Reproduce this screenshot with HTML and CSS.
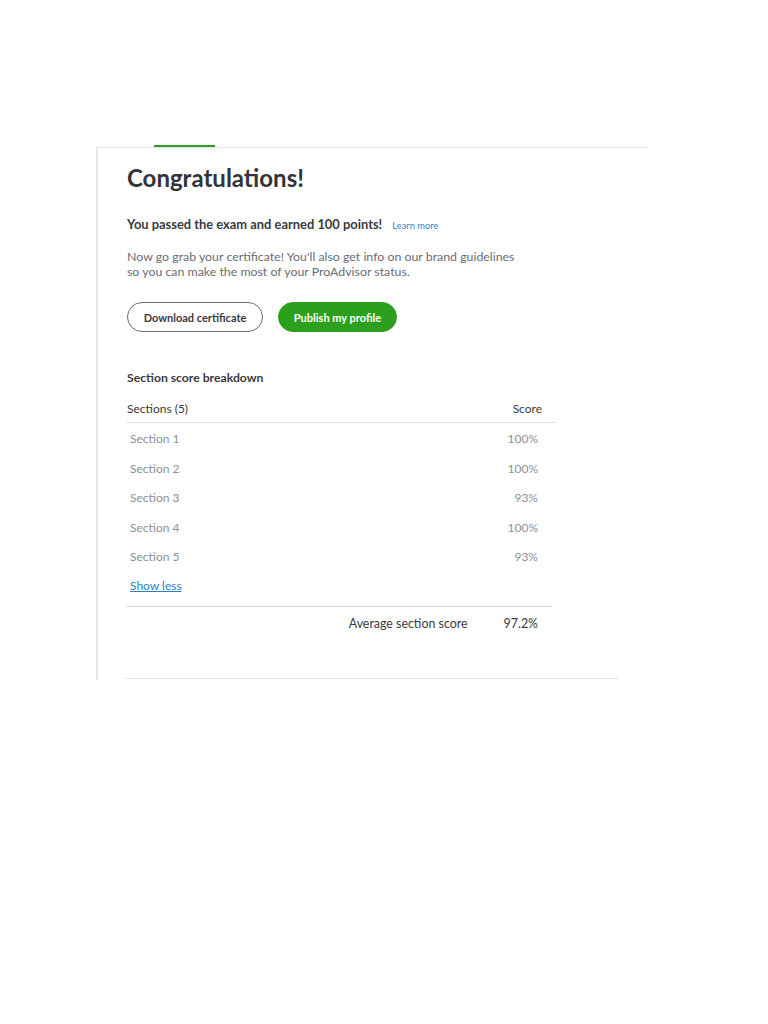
FILE: index.html
```html
<!DOCTYPE html>
<html lang="en">
<head>
<meta charset="utf-8">
<title>Congratulations</title>
<link rel="stylesheet" href="styles.css">
</head>
<body>
<div class="page">
  <div class="tabs"><span class="tab-indicator"></span></div>
  <section class="card">
    <h1 class="title">Congratulations!</h1>
    <p class="lead">You passed the exam and earned 100 points! <a class="learn" href="#">Learn more</a></p>
    <p class="body">Now go grab your certificate! You'll also get info on our brand guidelines<br>so you can make the most of your ProAdvisor status.</p>
    <div class="actions">
      <button class="btn btn-outline">Download certificate</button>
      <button class="btn btn-primary">Publish my profile</button>
    </div>
    <h2 class="subtitle">Section score breakdown</h2>
    <div class="table">
      <div class="thead">
        <span>Sections (5)</span>
        <span>Score</span>
      </div>
      <div class="row"><span>Section 1</span><span>100%</span></div>
      <div class="row"><span>Section 2</span><span>100%</span></div>
      <div class="row"><span>Section 3</span><span>93%</span></div>
      <div class="row"><span>Section 4</span><span>100%</span></div>
      <div class="row"><span>Section 5</span><span>93%</span></div>
      <a class="toggle" href="#">Show less</a>
      <div class="average">
        <span class="avg-label">Average section score</span>
        <span class="avg-value">97.2%</span>
      </div>
    </div>
    <div class="card-foot"></div>
  </section>
</div>
</body>
</html>
```

FILE: styles.css
```css
* { box-sizing: border-box; }
html, body { margin: 0; padding: 0; background: #fff; }
body {
  font-family: Lato, "Open Sans", "Liberation Sans", sans-serif;
  color: #393a3d;
}
.page {
  padding-top: 145px;
  padding-left: 96px;
}
.tabs {
  height: 2px;
  padding-left: 58px;
  display: flex;
}
.tab-indicator {
  display: block;
  width: 61px;
  height: 2px;
  background: #2ca01c;
}
.card {
  width: 552px;
  border-top: 1px solid #e3e3e3;
  border-left: 2px solid #e6e6e6;
  padding: 14px 0 0 29px;
  height: 533px;
}
.title {
  margin: 0;
  font-size: 24px;
  line-height: 32px;
  font-weight: 700;
  color: #333438;
}
.lead {
  margin: 22px 0 0;
  font-size: 12.9px;
  line-height: 16px;
  font-weight: 700;
  color: #393a3d;
}
.learn {
  font-size: 9.3px;
  font-weight: 400;
  color: #3a7fc4;
  text-decoration: none;
  margin-left: 7px;
}
.body {
  margin: 15px 0 0;
  font-size: 12.35px;
  line-height: 15px;
  color: #6b6c72;
}
.actions {
  display: flex;
  gap: 15px;
  margin-top: 23px;
}
.btn {
  font-family: inherit;
  height: 30px;
  border-radius: 15px;
  font-size: 11px;
  font-weight: 700;
  padding: 0;
  cursor: pointer;
}
.btn-outline {
  width: 136px;
  background: #fff;
  border: 1px solid #6b6c72;
  color: #393a3d;
}
.btn-primary {
  width: 119px;
  background: #2ca01c;
  border: 1px solid #2ca01c;
  color: #fff;
}
.subtitle {
  margin: 38px 0 0;
  font-size: 12.2px;
  line-height: 16px;
  font-weight: 700;
  color: #393a3d;
}
.table {
  width: 429px;
  margin-top: 15px;
}
.thead {
  display: flex;
  justify-content: space-between;
  font-size: 12px;
  line-height: 16px;
  color: #393a3d;
  padding: 0 14px 5px 0;
  border-bottom: 1px solid #dfdfdf;
}
.row {
  display: flex;
  justify-content: space-between;
  font-size: 12px;
  line-height: 16px;
  color: #8d9096;
  padding: 0 18px 0 3px;
  margin-top: 13.5px;
}
.thead + .row { margin-top: 8px; }
.toggle {
  display: inline-block;
  margin: 13px 0 0 3px;
  font-size: 12px;
  line-height: 16px;
  color: #2c7fc4;
  text-decoration: underline;
}
.average {
  width: 425px;
  display: flex;
  justify-content: flex-end;
  gap: 36px;
  font-size: 12.4px;
  line-height: 16px;
  color: #393a3d;
  border-top: 1px solid #d6d6d6;
  margin-top: 12px;
  padding: 9px 14px 0 0;
}
.card-foot {
  margin-top: 46px;
  margin-left: -2px;
  width: 493px;
  border-bottom: 1px solid #e6e6e6;
}
```
